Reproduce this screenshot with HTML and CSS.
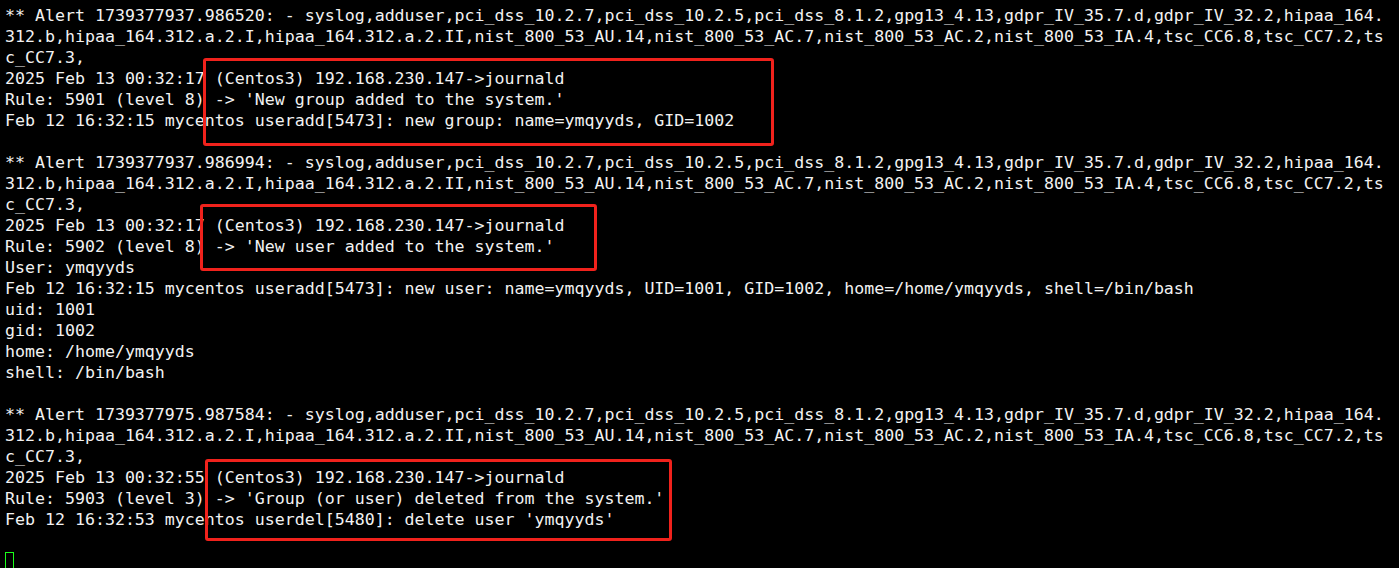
FILE: index.html
```html
<!DOCTYPE html>
<html lang="en">
<head>
<meta charset="utf-8">
<title>Terminal</title>
<link rel="stylesheet" href="styles.css">
</head>
<body>
<div class="term">
<div class="line">** Alert 1739377937.986520: - syslog,adduser,pci_dss_10.2.7,pci_dss_10.2.5,pci_dss_8.1.2,gpg13_4.13,gdpr_IV_35.7.d,gdpr_IV_32.2,hipaa_164.</div>
<div class="line">312.b,hipaa_164.312.a.2.I,hipaa_164.312.a.2.II,nist_800_53_AU.14,nist_800_53_AC.7,nist_800_53_AC.2,nist_800_53_IA.4,tsc_CC6.8,tsc_CC7.2,ts</div>
<div class="line">c_CC7.3,</div>
<div class="line">2025 Feb 13 00:32:17 (Centos3) 192.168.230.147-&gt;journald</div>
<div class="line">Rule: 5901 (level 8) -&gt; 'New group added to the system.'</div>
<div class="line">Feb 12 16:32:15 mycentos useradd[5473]: new group: name=ymqyyds, GID=1002</div>
<div class="line"> </div>
<div class="line">** Alert 1739377937.986994: - syslog,adduser,pci_dss_10.2.7,pci_dss_10.2.5,pci_dss_8.1.2,gpg13_4.13,gdpr_IV_35.7.d,gdpr_IV_32.2,hipaa_164.</div>
<div class="line">312.b,hipaa_164.312.a.2.I,hipaa_164.312.a.2.II,nist_800_53_AU.14,nist_800_53_AC.7,nist_800_53_AC.2,nist_800_53_IA.4,tsc_CC6.8,tsc_CC7.2,ts</div>
<div class="line">c_CC7.3,</div>
<div class="line">2025 Feb 13 00:32:17 (Centos3) 192.168.230.147-&gt;journald</div>
<div class="line">Rule: 5902 (level 8) -&gt; 'New user added to the system.'</div>
<div class="line">User: ymqyyds</div>
<div class="line">Feb 12 16:32:15 mycentos useradd[5473]: new user: name=ymqyyds, UID=1001, GID=1002, home=/home/ymqyyds, shell=/bin/bash</div>
<div class="line">uid: 1001</div>
<div class="line">gid: 1002</div>
<div class="line">home: /home/ymqyyds</div>
<div class="line">shell: /bin/bash</div>
<div class="line"> </div>
<div class="line">** Alert 1739377975.987584: - syslog,adduser,pci_dss_10.2.7,pci_dss_10.2.5,pci_dss_8.1.2,gpg13_4.13,gdpr_IV_35.7.d,gdpr_IV_32.2,hipaa_164.</div>
<div class="line">312.b,hipaa_164.312.a.2.I,hipaa_164.312.a.2.II,nist_800_53_AU.14,nist_800_53_AC.7,nist_800_53_AC.2,nist_800_53_IA.4,tsc_CC6.8,tsc_CC7.2,ts</div>
<div class="line">c_CC7.3,</div>
<div class="line">2025 Feb 13 00:32:55 (Centos3) 192.168.230.147-&gt;journald</div>
<div class="line">Rule: 5903 (level 3) -&gt; 'Group (or user) deleted from the system.'</div>
<div class="line">Feb 12 16:32:53 mycentos userdel[5480]: delete user 'ymqyyds'</div>
<div class="line"> </div>
<div class="line"><span class="cursor"></span></div>

<div class="mark mark-1"></div>
<div class="mark mark-2"></div>
<div class="mark mark-3"></div>
</div>
</body>
</html>
```
FILE: styles.css
```css
html, body {
  margin: 0;
  padding: 0;
  background: #000;
  overflow: hidden;
}
.term {
  position: relative;
  height: 568px;
  padding: 5px 0 0 5px;
  box-sizing: border-box;
  color: #f2f2f2;
  font-family: "DejaVu Sans Mono", monospace;
  font-size: 16.6px;
  line-height: 21px;
}
.line {
  white-space: pre;
  height: 21px;
}
.cursor {
  display: inline-block;
  width: 9px;
  height: 20px;
  margin-top: 1px;
  border: 1px solid #1aff1a;
  box-sizing: border-box;
  vertical-align: top;
}
.mark {
  position: absolute;
  border: 3px solid #f0221c;
  border-radius: 3px;
  box-sizing: border-box;
}
.mark-1 { left: 203px; top: 58px; width: 571px; height: 88px; }
.mark-2 { left: 200px; top: 204px; width: 397px; height: 67px; }
.mark-3 { left: 205px; top: 459px; width: 467px; height: 82px; }
```
